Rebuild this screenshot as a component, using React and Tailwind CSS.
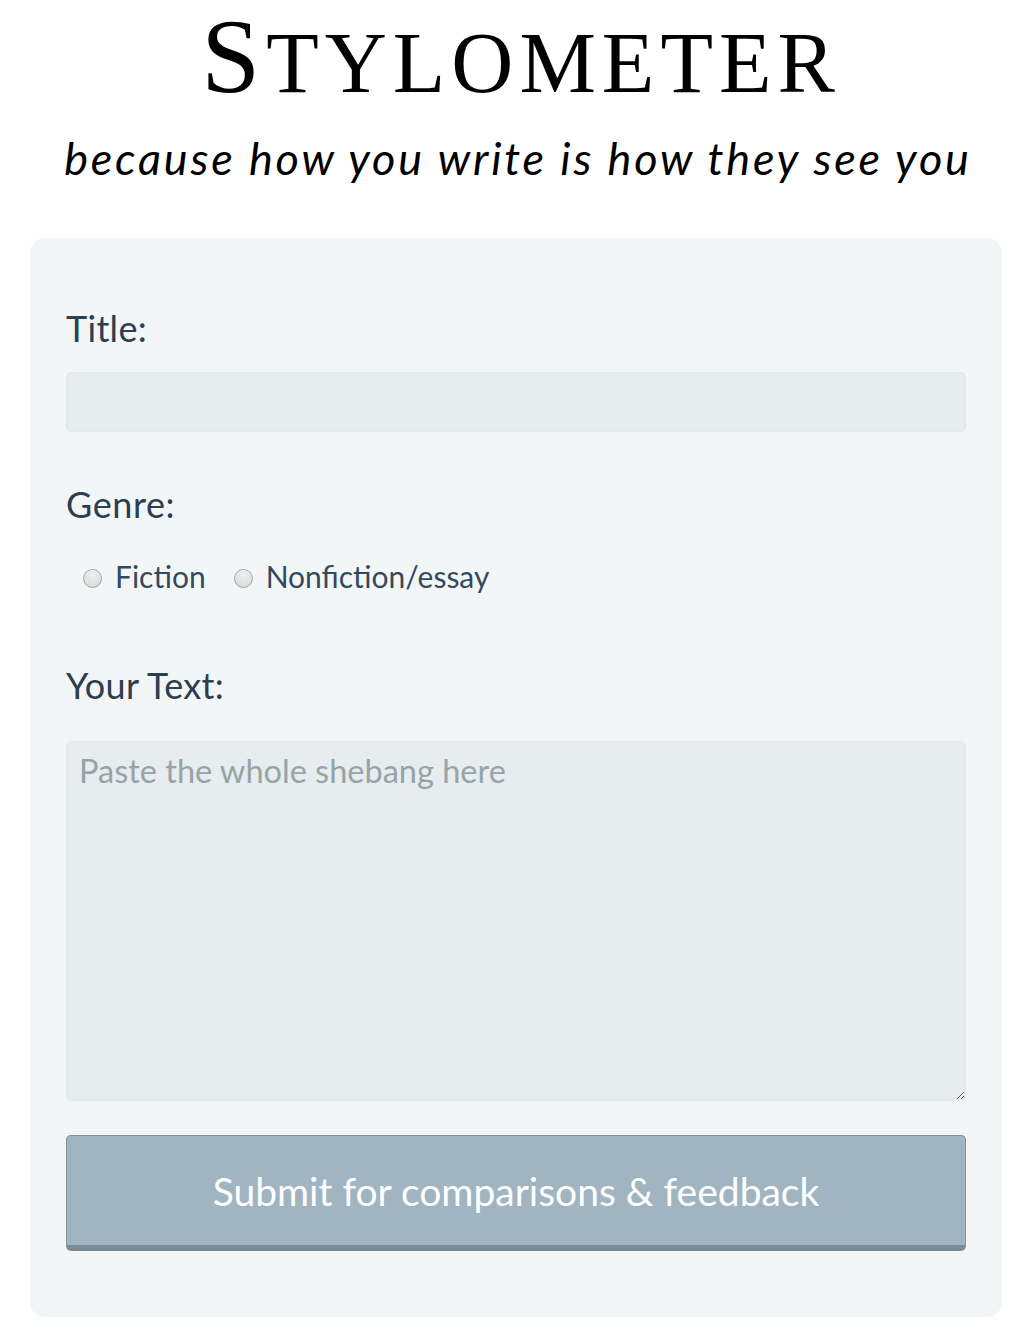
import React, { useState } from 'react';

const radioCls =
  "appearance-none w-[19px] h-[19px] mt-[5px] rounded-full border border-[#a3a3a3] bg-[radial-gradient(circle_at_50%_35%,#f0f0f0,#d4d4d4)] shadow-[inset_0_1px_1px_rgba(255,255,255,0.8)] checked:bg-[radial-gradient(circle,#4a6a80_35%,#d9d9d9_40%)]";

export default function App() {
  const [genre, setGenre] = useState('');

  return (
    <div className="w-[1036px] min-h-[1332px] bg-white font-['Lato','Open_Sans',sans-serif]">
      <h1 className="flex justify-center items-baseline pt-[4px] pl-[6px] text-black font-['Liberation_Serif',serif] tracking-[6px]">
        <span className="text-[106px] leading-none">S</span>
        <span className="text-[86px] leading-none">TYLOMETER</span>
      </h1>
      <p className="text-center mt-[22px] text-[45px] leading-[52px] italic text-black tracking-[2.8px]">
        because how you write is how they see you
      </p>

      <form className="mx-[30px] mt-[54px] w-[972px] bg-[#f2f6f7] rounded-[15px] px-[36px] pt-[70px] pb-[66px]">
        <label className="block text-[36px] leading-[40px] text-[#2c3e50] tracking-[0.3px]">Title:</label>
        <input
          type="text"
          className="mt-[24px] block w-full h-[60px] bg-[#e7ecee] rounded-[5px] border border-[#e3e8ea] px-[12px] text-[28px] outline-none"
        />

        <label className="block mt-[52px] text-[36px] leading-[40px] text-[#2c3e50] tracking-[0.6px]">Genre:</label>
        <div className="mt-[34px] ml-[17px] flex items-center gap-[28px] text-[30px] leading-[36px] text-[#34495e]">
          <label className="flex items-center gap-[13px]">
            <input
              type="radio"
              name="genre"
              checked={genre === 'fiction'}
              onChange={() => setGenre('fiction')}
              className={radioCls}
            />
            Fiction
          </label>
          <label className="flex items-center gap-[13px]">
            <input
              type="radio"
              name="genre"
              checked={genre === 'nonfiction'}
              onChange={() => setGenre('nonfiction')}
              className={radioCls}
            />
            Nonfiction/essay
          </label>
        </div>

        <label className="block mt-[71px] text-[36px] leading-[40px] text-[#2c3e50] tracking-[0.3px]">Your Text:</label>
        <textarea
          placeholder="Paste the whole shebang here"
          className="mt-[36px] block w-full h-[360px] bg-[#e7ecee] rounded-[5px] border border-[#e3e8ea] px-[12px] py-[9px] text-[32.5px] leading-[40px] text-[#2c3e50] placeholder:text-[#95a5a6] outline-none"
        />

        <button
          type="button"
          className="mt-[34px] block w-full h-[116px] bg-[#a0b5c1] rounded-[5px] border border-[#7f909a] border-b-[6px] border-b-[#7b8b95] text-white text-[39px] leading-[44px]"
        >
          Submit for comparisons &amp; feedback
        </button>
      </form>
    </div>
  );
}
